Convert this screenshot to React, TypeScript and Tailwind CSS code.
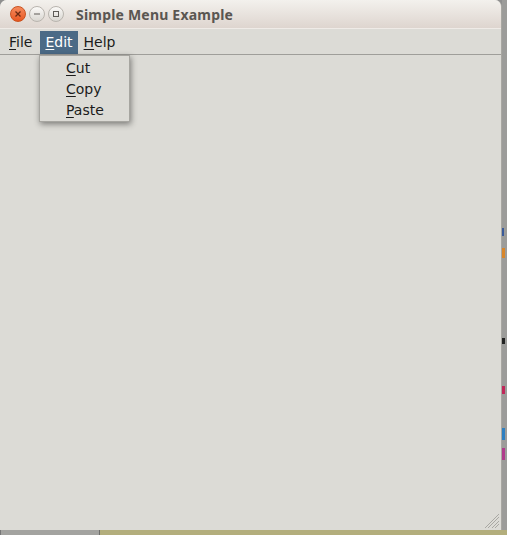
import React from "react";

const ui = { fontFamily: '"Noto Sans", "DejaVu Sans", sans-serif' };
const menuFont = { fontFamily: '"DejaVu Sans", "Noto Sans", sans-serif' };

function Mnemonic({ first, rest }: { first: string; rest: string }) {
  return (
    <span>
      <span className="underline underline-offset-2 decoration-1">{first}</span>
      {rest}
    </span>
  );
}

export default function App() {
  return (
    <div className="relative w-[507px] h-[535px] overflow-hidden bg-[#8f8f8f]" style={ui}>
      {/* desktop strip on the right */}
      <div className="absolute right-0 top-0 w-[5px] h-[535px] bg-[#9c9c9a]">
        <div className="mt-[228px] h-[8px] w-[2px] bg-[#3b5b9a]" />
        <div className="mt-[12px] h-[10px] w-[3px] bg-[#d9862a]" />
        <div className="mt-[80px] h-[6px] w-[3px] bg-[#222]" />
        <div className="mt-[42px] h-[8px] w-[3px] bg-[#c0275a]" />
        <div className="mt-[34px] h-[12px] w-[3px] bg-[#2e7fc1]" />
        <div className="mt-[8px] h-[12px] w-[3px] bg-[#b03c8c]" />
      </div>
      {/* desktop strip at the bottom */}
      <div className="absolute left-0 bottom-0 w-[507px] h-[5px] flex">
        <div className="w-[99px] bg-[#a3a3a0] border-l border-[#777]" />
        <div className="w-[1px] bg-[#6d6d6a]" />
        <div className="flex-1 bg-[#b3ae7c]" />
      </div>

      {/* window */}
      <div className="relative w-[502px] h-[530px] rounded-t-[7px] overflow-hidden flex flex-col bg-[#dcdbd6] border-r border-[#a8a7a2]">
        {/* title bar */}
        <div className="h-[29px] flex items-center bg-gradient-to-b from-[#f3f1ed] to-[#ded5cf] border-b border-[#efebe7]">
          <div className="flex items-center gap-[3px] ml-[10px]">
            <div className="w-[16px] h-[16px] rounded-full bg-gradient-to-b from-[#f58a5c] to-[#e8561f] border border-[#c9521f] flex items-center justify-center">
              <svg width="8" height="8" viewBox="0 0 8 8">
                <path d="M1.5 1.5 L6.5 6.5 M6.5 1.5 L1.5 6.5" stroke="#6a2a12" strokeWidth="1.3" />
              </svg>
            </div>
            <div className="w-[16px] h-[16px] rounded-full bg-gradient-to-b from-[#fbfaf8] to-[#d9d6d1] border border-[#b8b4ae] flex items-center justify-center">
              <svg width="8" height="8" viewBox="0 0 8 8">
                <path d="M1 4 H7" stroke="#5e5b57" strokeWidth="1.2" />
              </svg>
            </div>
            <div className="w-[16px] h-[16px] rounded-full bg-gradient-to-b from-[#fbfaf8] to-[#d9d6d1] border border-[#b8b4ae] flex items-center justify-center">
              <svg width="8" height="8" viewBox="0 0 8 8">
                <rect x="1.5" y="1.5" width="5" height="5" fill="none" stroke="#5e5b57" strokeWidth="1" />
              </svg>
            </div>
          </div>
          <div className="ml-[12px] text-[14px] font-bold text-[#5a5651] tracking-[0.2px]">
            Simple Menu Example
          </div>
        </div>

        {/* menu bar */}
        <div
          className="h-[26px] flex items-center pl-[7px] pt-[1px] border-b border-[#9f9e9a] bg-[#dcdbd6] text-[14px] text-[#1b1b1b]"
          style={menuFont}
        >
          <div className="pl-[2px] pr-[8px] h-[23px] flex items-center">
            <Mnemonic first="F" rest="ile" />
          </div>
          <div className="px-[5px] h-[23px] flex items-center bg-[#4b6a86] text-white">
            <Mnemonic first="E" rest="dit" />
          </div>
          <div className="pl-[6px] h-[23px] flex items-center">
            <Mnemonic first="H" rest="elp" />
          </div>
        </div>

        {/* content */}
        <div className="flex-1 relative">
          <div className="absolute right-[1px] bottom-[1px]">
            <svg width="16" height="16" viewBox="0 0 16 16">
              <path
                d="M15 1 L1 15 M15 4 L4 15 M15 8 L8 15 M15 11 L11 15"
                stroke="#a9a8a3"
                strokeWidth="1"
              />
            </svg>
          </div>
        </div>

        {/* dropdown */}
        <div
          className="absolute left-[39px] top-[55px] w-[91px] h-[67px] bg-[#dcdbd6] border border-[#a6a5a0] shadow-[1px_2px_6px_rgba(0,0,0,0.45)] flex flex-col pt-[2px] text-[14px] text-[#1b1b1b]"
          style={menuFont}
        >
          <div className="h-[21px] flex items-center pl-[26px]">
            <Mnemonic first="C" rest="ut" />
          </div>
          <div className="h-[21px] flex items-center pl-[26px]">
            <Mnemonic first="C" rest="opy" />
          </div>
          <div className="h-[21px] flex items-center pl-[26px]">
            <Mnemonic first="P" rest="aste" />
          </div>
        </div>
      </div>
    </div>
  );
}
